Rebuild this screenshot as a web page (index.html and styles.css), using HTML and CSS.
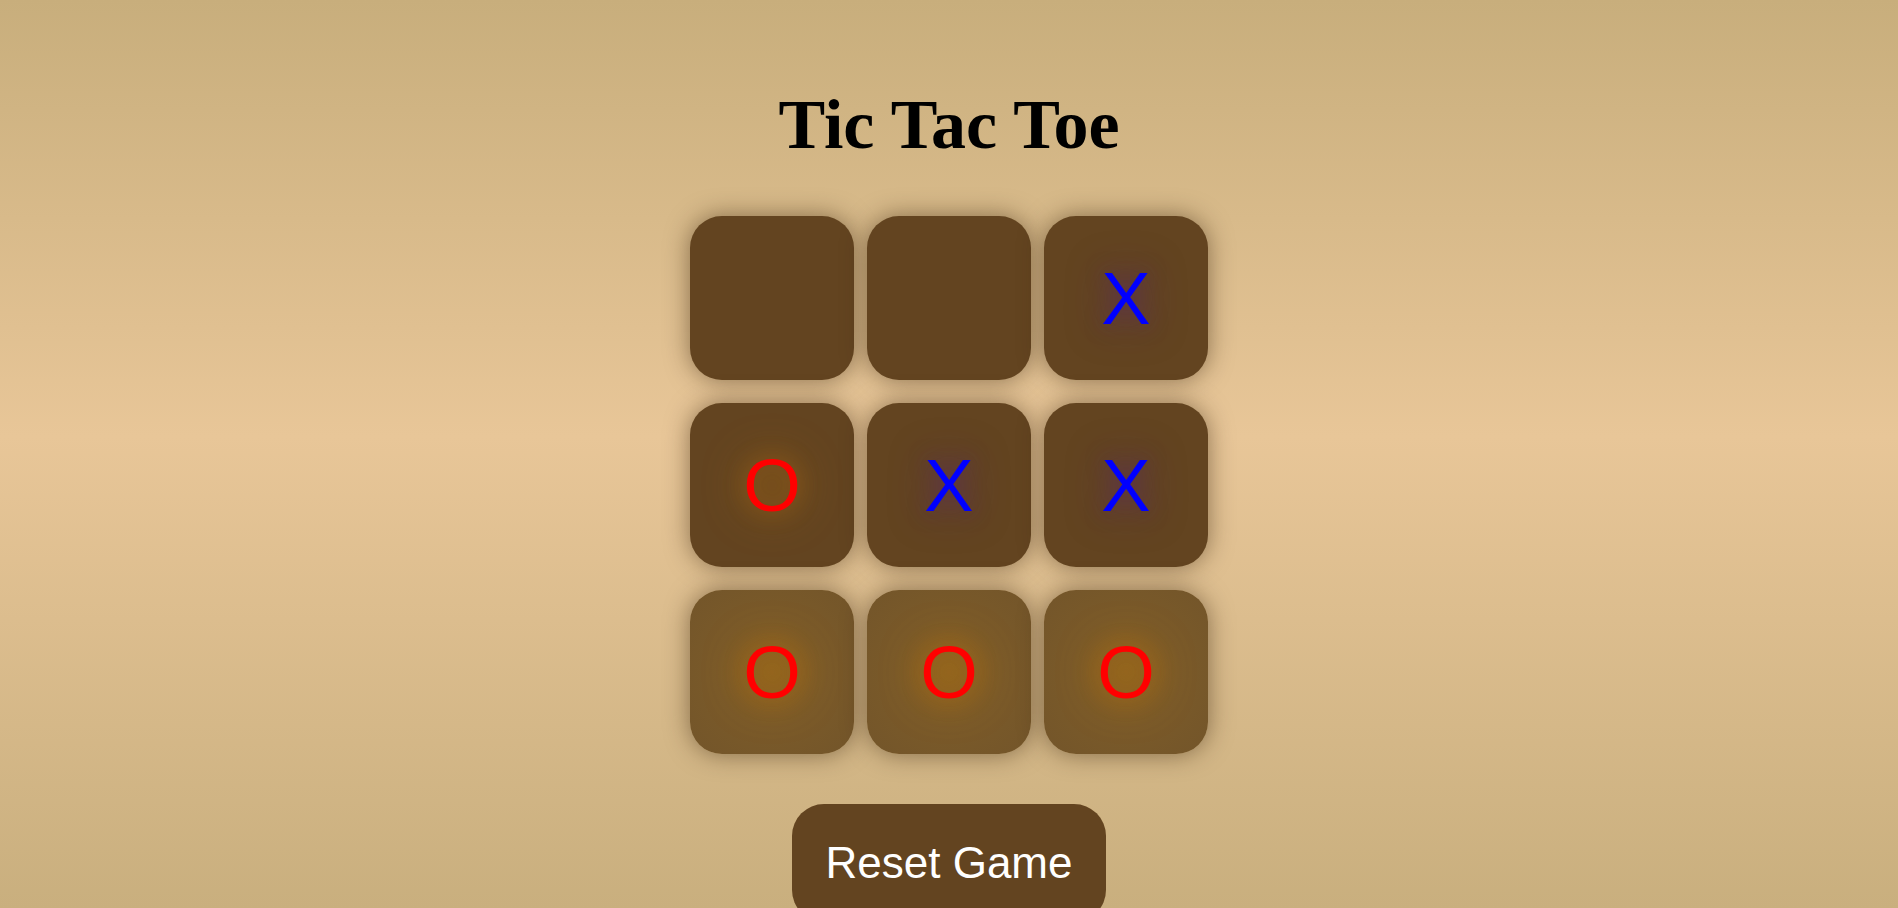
FILE: index.html
```html
<!DOCTYPE html>
<html lang="en">
<head>
<meta charset="utf-8">
<title>Tic Tac Toe</title>
<link rel="stylesheet" href="styles.css">
</head>
<body>
<main class="game">
  <h1 class="title">Tic Tac Toe</h1>
  <div class="board">
    <div class="cell"></div>
    <div class="cell"></div>
    <div class="cell x">X</div>
    <div class="cell o">O</div>
    <div class="cell x">X</div>
    <div class="cell x">X</div>
    <div class="cell o win">O</div>
    <div class="cell o win">O</div>
    <div class="cell o win">O</div>
  </div>
  <button class="reset">Reset Game</button>
</main>
</body>
</html>
```

FILE: styles.css
```css
html, body {
  margin: 0;
  height: 100%;
  overflow: hidden;
}

body {
  background: linear-gradient(to bottom, #c8ae7c 0%, #e8c698 48%, #c9af7e 100%);
  font-family: "Liberation Sans", Arial, sans-serif;
}

.game {
  display: flex;
  flex-direction: column;
  align-items: center;
  padding-top: 85px;
}

.title {
  margin: 0;
  font-family: "Liberation Serif", "Times New Roman", serif;
  font-weight: bold;
  font-size: 70px;
  line-height: normal;
  color: #000;
}

.board {
  margin-top: 51px;
  display: grid;
  grid-template-columns: repeat(3, 164px);
  grid-auto-rows: 164px;
  column-gap: 13px;
  row-gap: 23px;
}

.cell {
  background: #634420;
  border-radius: 32px;
  box-shadow: 0 0 24px rgba(50, 30, 8, 0.5);
  display: flex;
  align-items: center;
  justify-content: center;
  padding-top: 2px;
  font-size: 74px;
  line-height: 1;
}

.cell.x {
  color: #0000ff;
  text-shadow: 0 0 40px rgba(90, 40, 110, 0.9), 0 0 20px rgba(90, 40, 110, 0.5);
}

.cell.o {
  color: #ff0000;
  text-shadow: 0 0 40px rgba(190, 120, 20, 0.9), 0 0 20px rgba(170, 100, 20, 0.5);
}

.cell.win {
  background: radial-gradient(circle at center, #8a6221 0%, #7a5a29 45%, #73552a 100%);
}

.reset {
  margin-top: 50px;
  padding: 34px 34px;
  border: none;
  border-radius: 32px;
  background: #634420;
  color: #fff;
  font-family: "Liberation Sans", Arial, sans-serif;
  font-size: 44px;
  line-height: normal;
  cursor: pointer;
}
```
